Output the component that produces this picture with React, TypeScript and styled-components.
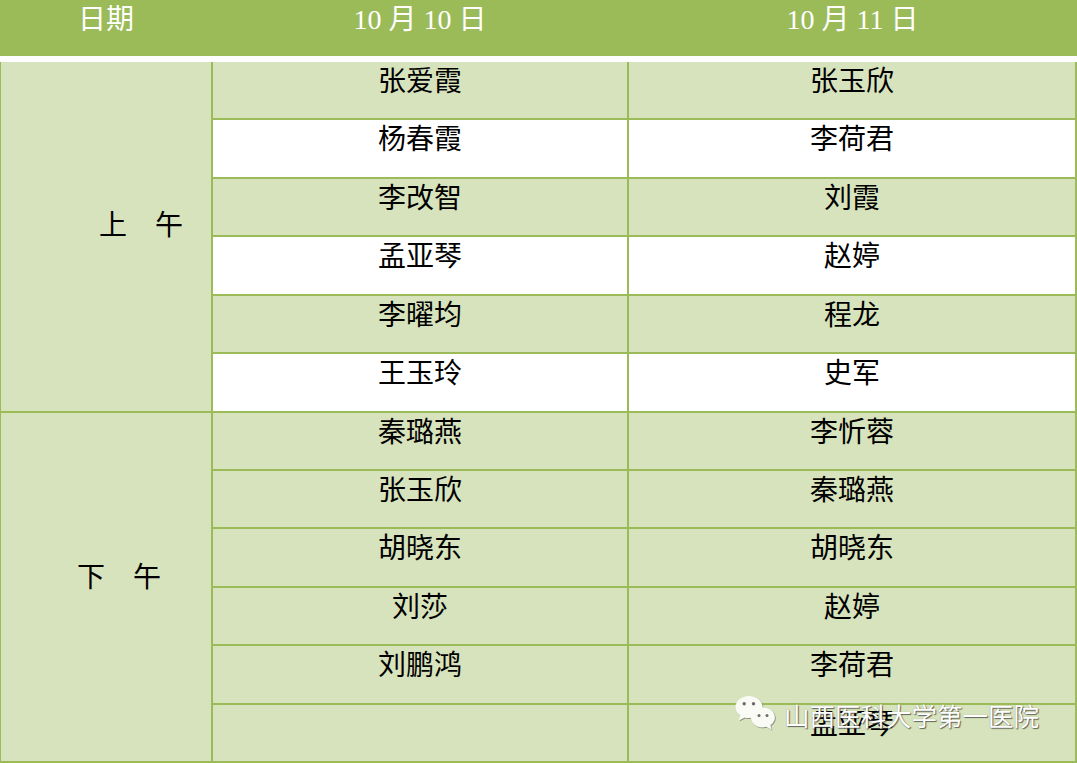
import React from "react";
import styled, { createGlobalStyle } from "styled-components";

const GREEN = "#9bbb59";
const LIGHT = "#d7e3bc";

const Global = createGlobalStyle`
  html, body { margin: 0; padding: 0; background: #fff; overflow: hidden; }
  #root { width: 1077px; }
`;

const Page = styled.div`
  position: relative;
  width: 1077px;
  height: 763px;
  font-family: "Liberation Serif", "Noto Sans CJK SC", serif;
  font-size: 28px;
  background: #fff;
`;

const Header = styled.div`
  display: grid;
  grid-template-columns: 212px 416px 1fr;
  height: 56px;
  background: ${GREEN};
  margin-bottom: 6px;
`;

const HeadCell = styled.div`
  color: #fff;
  text-align: center;
  line-height: 38px;
  padding-top: 1px;
`;

const Body = styled.div`
  display: grid;
  grid-template-columns: 210px 414px 1fr;
  grid-template-rows: repeat(12, 1fr);
  gap: 2px;
  padding: 0 2px 2px 1px;
  height: 701px;
  box-sizing: border-box;
  background: ${GREEN};
`;

const Period = styled.div<{ $indent: number; $lift: number }>`
  grid-row: span 6;
  background: ${LIGHT};
  display: flex;
  align-items: center;
  padding-left: ${(p) => p.$indent}px;
  padding-bottom: ${(p) => p.$lift}px;
  color: #000;
  line-height: 38px;
`;

const Cell = styled.div<{ $white: boolean }>`
  background: ${(p) => (p.$white ? "#fff" : LIGHT)};
  color: #000;
  text-align: center;
  line-height: 38px;
  padding-top: 1px;
`;

const Watermark = styled.div`
  position: absolute;
  left: 734px;
  top: 694px;
  display: flex;
  align-items: center;
  gap: 8px;
  pointer-events: none;
`;

const WatermarkText = styled.span`
  font-family: "Noto Sans CJK SC", "Noto Sans", sans-serif;
  font-size: 25.5px;
  line-height: 40px;
  color: #fff;
  text-shadow: 1px 1px 1px rgba(60, 60, 60, 0.75), 0 0 1px rgba(80, 80, 80, 0.5);
`;

const WeChatIcon = () => (
  <svg width="42" height="41" viewBox="0 0 42 41">
    <defs>
      <filter id="sh" x="-20%" y="-20%" width="140%" height="140%">
        <feDropShadow dx="0.8" dy="0.8" stdDeviation="0.7" floodColor="#555" floodOpacity="0.7" />
      </filter>
    </defs>
    <g filter="url(#sh)" fill="#fbfbf6">
      <path d="M15 2 C7.5 2 1.5 7 1.5 13 C1.5 16.5 3.3 19.4 6.2 21.3 L4.8 26.5 L10.5 23.4 C12 23.9 13.5 24.1 15 24.1 C22.5 24.1 28.5 19.1 28.5 13 C28.5 7 22.5 2 15 2 Z" />
      <path d="M29 13.5 C22.4 13.5 17 17.9 17 23.4 C17 28.9 22.4 33.3 29 33.3 C30.2 33.3 31.4 33.1 32.5 32.8 L37.5 35.8 L36.3 31.1 C38.9 29.3 40.8 26.5 40.8 23.4 C40.8 17.9 35.5 13.5 29 13.5 Z" />
    </g>
    <g fill="#6b6b6b">
      <circle cx="10.2" cy="9.8" r="1.7" />
      <circle cx="19.5" cy="9.8" r="1.7" />
      <circle cx="25" cy="21.5" r="1.5" />
      <circle cx="33" cy="21.5" r="1.5" />
    </g>
  </svg>
);

const rows: [string, string][] = [
  ["张爱霞", "张玉欣"],
  ["杨春霞", "李荷君"],
  ["李改智", "刘霞"],
  ["孟亚琴", "赵婷"],
  ["李曜均", "程龙"],
  ["王玉玲", "史军"],
  ["秦璐燕", "李忻蓉"],
  ["张玉欣", "秦璐燕"],
  ["胡晓东", "胡晓东"],
  ["刘莎", "赵婷"],
  ["刘鹏鸿", "李荷君"],
  ["", "孟亚琴"],
];

export default function App() {
  const renderRow = (i: number) => {
    const white = i < 6 && i % 2 === 1;
    return (
      <React.Fragment key={i}>
        <Cell $white={white}>{rows[i][0]}</Cell>
        <Cell $white={white}>{rows[i][1]}</Cell>
      </React.Fragment>
    );
  };
  return (
    <>
      <Global />
      <Page>
        <Header>
          <HeadCell>日期</HeadCell>
          <HeadCell>10 月 10 日</HeadCell>
          <HeadCell>10 月 11 日</HeadCell>
        </Header>
        <Body>
          <Period $indent={98} $lift={20}>上　午</Period>
          {[0, 1, 2, 3, 4, 5].map(renderRow)}
          <Period $indent={76} $lift={18}>下　午</Period>
          {[6, 7, 8, 9, 10, 11].map(renderRow)}
        </Body>
        <Watermark>
          <WeChatIcon />
          <WatermarkText>山西医科大学第一医院</WatermarkText>
        </Watermark>
      </Page>
    </>
  );
}
